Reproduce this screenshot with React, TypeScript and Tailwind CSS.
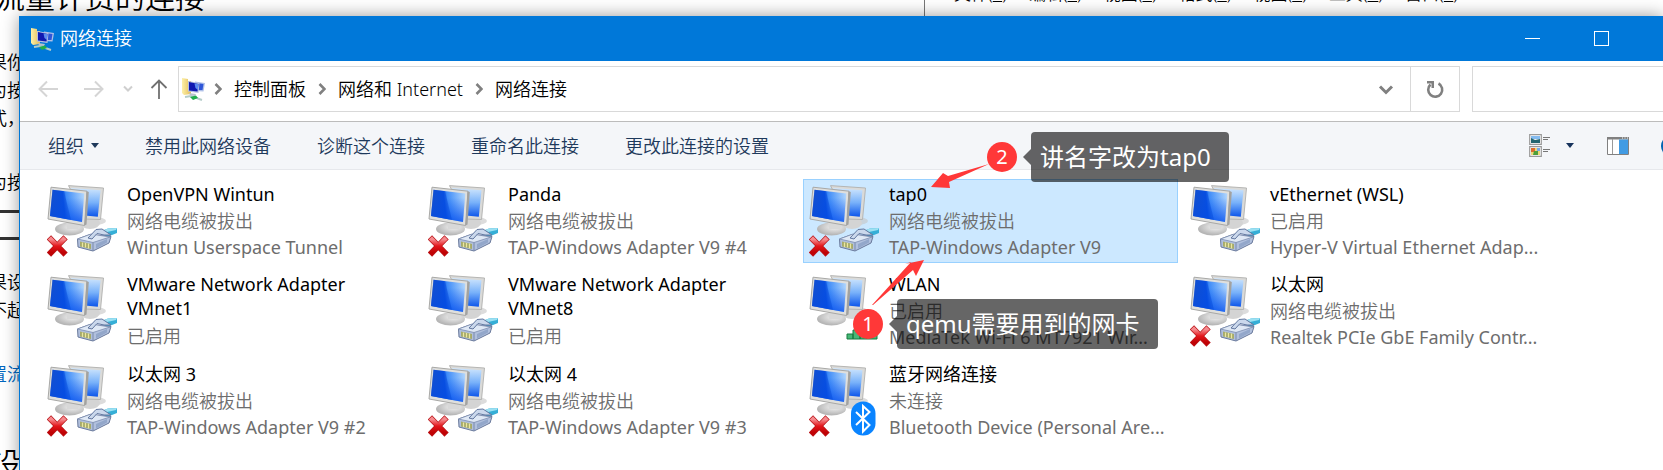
import React from "react";
import { clsx } from "clsx";

type Badge = "cable" | "wifi" | "bluetooth";

interface Connection {
  name: string;
  status?: string;
  device?: string;
  badge: Badge;
  unplugged?: boolean;
  selected?: boolean;
}

const connections: Connection[] = [
  { name: "OpenVPN Wintun", status: "网络电缆被拔出", device: "Wintun Userspace Tunnel", badge: "cable", unplugged: true },
  { name: "Panda", status: "网络电缆被拔出", device: "TAP-Windows Adapter V9 #4", badge: "cable", unplugged: true },
  { name: "tap0", status: "网络电缆被拔出", device: "TAP-Windows Adapter V9", badge: "cable", unplugged: true, selected: true },
  { name: "vEthernet (WSL)", status: "已启用", device: "Hyper-V Virtual Ethernet Adap...", badge: "cable" },
  { name: "VMware Network Adapter VMnet1", status: "已启用", badge: "cable" },
  { name: "VMware Network Adapter VMnet8", status: "已启用", badge: "cable" },
  { name: "WLAN", status: "已启用", device: "MediaTek Wi-Fi 6 MT7921 Wir...", badge: "wifi" },
  { name: "以太网", status: "网络电缆被拔出", device: "Realtek PCIe GbE Family Contr...", badge: "cable", unplugged: true },
  { name: "以太网 3", status: "网络电缆被拔出", device: "TAP-Windows Adapter V9 #2", badge: "cable", unplugged: true },
  { name: "以太网 4", status: "网络电缆被拔出", device: "TAP-Windows Adapter V9 #3", badge: "cable", unplugged: true },
  { name: "蓝牙网络连接", status: "未连接", device: "Bluetooth Device (Personal Are...", badge: "bluetooth", unplugged: true },
];

function Gradients() {
  return (
    <svg width="0" height="0" className="absolute" aria-hidden="true">
      <defs>
        <linearGradient id="screen" x1="0" y1="0.1" x2="1" y2="0">
          <stop offset="0" stopColor="#1f56c8" />
          <stop offset="0.36" stopColor="#0a55e8" />
          <stop offset="0.46" stopColor="#3f8cf8" />
          <stop offset="1" stopColor="#b4d8fd" />
        </linearGradient>
        <linearGradient id="screenFade" x1="0" y1="0" x2="0" y2="1">
          <stop offset="0.25" stopColor="#0650ee" stopOpacity="0" />
          <stop offset="1" stopColor="#0650ee" stopOpacity="0.8" />
        </linearGradient>
        <linearGradient id="backScreen" x1="0" y1="0" x2="0" y2="1">
          <stop offset="0" stopColor="#cfe6fd" />
          <stop offset="0.5" stopColor="#79b2fa" />
          <stop offset="1" stopColor="#0c55ea" />
        </linearGradient>
        <radialGradient id="foot" cx="0.6" cy="0.35" r="0.6">
          <stop offset="0" stopColor="#f4f4f4" />
          <stop offset="1" stopColor="#b6b6b6" />
        </radialGradient>
        <linearGradient id="cross" x1="0" y1="0" x2="0" y2="1">
          <stop offset="0" stopColor="#f58a8e" />
          <stop offset="0.5" stopColor="#e3161b" />
          <stop offset="1" stopColor="#c00205" />
        </linearGradient>
        <linearGradient id="folder" x1="0" y1="0" x2="1" y2="0">
          <stop offset="0" stopColor="#fdf0a8" />
          <stop offset="1" stopColor="#e3bd58" />
        </linearGradient>
      </defs>
    </svg>
  );
}

function AdapterIcon({ badge, unplugged }: { badge: Badge; unplugged?: boolean }) {
  return (
    <svg viewBox="0 0 70 72" className="h-[72px] w-[70px] shrink-0" aria-hidden="true">
      <ellipse cx="48" cy="36" rx="11" ry="4" fill="#c4c4c4" opacity="0.6" />
      <ellipse cx="43" cy="38" rx="10" ry="6" fill="#d4d4d4" />
      <path d="M21.500 .6 56.500 3 53.500 34.500 38 34Z" fill="#dadad8" stroke="#b0b0ae" strokeWidth=".9" />
      <path d="M24 3 53.500 5.200 50.800 31.800 38 30.500Z" fill="url(#backScreen)" />
      <path d="M20 38 34 40 35 46 20 46Z" fill="#bcbcbc" />
      <ellipse cx="22.500" cy="44" rx="14.500" ry="6.500" fill="url(#foot)" />
      <path d="M19 37 33 39 31 44 20 44Z" fill="#d8d8d8" />
      <path d="M4 2.200 40 6.200 37.500 40.500 1 34Z" fill="#dfdfdd" stroke="#a8a8a6" strokeWidth="1" />
      <path d="M39.500 6.200 41.800 7 39.500 39.500 37.500 40.500Z" fill="#a2a2a0" />
      <path d="M5.500 4.800 37.300 8.600 35 37 3 31Z" fill="url(#screen)" />
      <path d="M5.500 4.800 37.300 8.600 35 37 3 31Z" fill="url(#screenFade)" />
      <path d="M5.500 4.800 17 6.200 24 34.900 3 31Z" fill="#0447d6" opacity=".45" />
      {badge === "cable" && (
        <g strokeLinejoin="round">
          <path d="M52 47 61 43.500 70 43 70 48 60 52Z" fill="#35aed6" />
          <path d="M54 46 61 43.500 70 43 69 45 60 47Z" fill="#9be0f2" />
          <path d="M30.500 54 43 49.500 64 51.500 62 58 46 66 31 62Z" fill="#b1c0dd" stroke="#6a7a9c" />
          <path d="M30.500 54 44 49 63 52 46 57.500Z" fill="#dfe8f5" stroke="#7c8db0" strokeWidth=".8" />
          <path d="M41 53 49 44.500 55 44 64 50 57 50 50 48.500 45 54Z" fill="#cbd8ec" stroke="#62779f" />
          <path d="M46 57.500V66" stroke="#7889a9" />
          <path d="M33 56.500 44 59V64L33 61.500Z" fill="#a6aa6a" />
          <path d="M35.500 57.500v4.500M38.500 58v4.500M41.500 58.500v5" stroke="#ece79f" strokeWidth="1.200" />
          <path d="M49 59 60 54v3.500l-11 6Z" fill="#93a7ca" />
        </g>
      )}
      {badge === "wifi" && (
        <g stroke="#157a3f" fill="#46b877">
          <path d="M38 59h6v5h-6ZM44 55h7v9h-7ZM51 50h7v14h-7ZM58 45h10v19H58Z" />
        </g>
      )}
      {badge === "bluetooth" && (
        <g>
          <rect x="42" y="36.500" width="24.500" height="34" rx="12" fill="#0a84ff" />
          <path d="M47 47 60.500 60 54 66.500V41L60.500 47 47 60" fill="none" stroke="#fff" strokeWidth="2" />
        </g>
      )}
      {unplugged && (
        <g strokeLinecap="square" fill="none">
          <path d="M4 54.500 16.500 67.500M16.500 54.500 4 67.500" stroke="#b91418" strokeWidth="6" />
          <path d="M4 54.500 16.500 67.500M16.500 54.500 4 67.500" stroke="url(#cross)" strokeWidth="4.600" />
        </g>
      )}
    </svg>
  );
}

function FolderIcon() {
  return (
    <svg viewBox="0 0 24 24" className="size-6 shrink-0" aria-hidden="true">
      <path d="M1 1 7 2V4h3v13L3 18 1 16Z" fill="url(#folder)" />
      <path d="M14 4.500 24 6 22.500 14.500 14 14Z" fill="#aebfe8" />
      <path d="M15.500 6 22.500 7 21.500 13 15 13Z" fill="#2e56d8" />
      <path d="M7 4 18.500 6 17.500 16 7 14.500Z" fill="#b4bfe0" />
      <path d="M8 5 17.500 7 16.500 14.500 8 13.500Z" fill="#1018b0" />
      <path d="M13.500 6.500 17.500 7 17 13 14.500 11Z" fill="#5b8cf0" />
      <path d="M8 16 15 17 14 19 9 18.500Z" fill="#b9c0cc" />
      <path d="M4 20 10 19 21 23" fill="none" stroke="#b4ccc9" strokeWidth="2" />
      <path d="M9 20 15 18.500 17 21 12 23Z" fill="#1fae4b" />
    </svg>
  );
}

function Crumb({ children }: { children: React.ReactNode }) {
  return (
    <li className="flex items-center">
      <svg viewBox="0 0 8 12" className="mr-3 h-3 w-2" aria-hidden="true">
        <path d="M1.500 1 6.500 6 1.500 11" fill="none" stroke="#808080" strokeWidth="2.600" />
      </svg>
      <a href="#" className="mr-3">{children}</a>
    </li>
  );
}

function NavIcon({ d, tone, width = 1.8 }: { d: string; tone: string; width?: number }) {
  return (
    <svg viewBox="0 0 20 20" className={clsx("size-5", tone)} aria-hidden="true">
      <path d={d} fill="none" stroke="currentColor" strokeWidth={width} />
    </svg>
  );
}

function Callout({ step, children }: { step: string; children: React.ReactNode }) {
  return (
    <div className="flex items-center font-normal">
      <span className="flex size-[30px] items-center justify-center rounded-full bg-[#ff3838] text-xl leading-none text-white">{step}</span>
      <svg viewBox="0 0 8 16" className="ml-[6px] h-4 w-2" aria-hidden="true">
        <path d="M0 8 8 0V16Z" fill="#000" fillOpacity=".6" />
      </svg>
      <span className="h-[50px] rounded bg-black/60 pr-[18px] pl-[9px] text-2xl leading-[50px] whitespace-nowrap text-white">{children}</span>
    </div>
  );
}

const backgroundMenu = [
  ["文件", "E"],
  ["编辑", "E"],
  ["视图", "E"],
  ["格式", "E"],
  ["视图", "V"],
  ["工具", "B"],
  ["窗口", "E"],
];

function Backdrop() {
  return (
    <div className="absolute inset-0 overflow-hidden bg-white text-lg leading-7 whitespace-nowrap" aria-hidden="true">
      <p className="absolute -top-[23px] -left-[5px] text-[30px] leading-10">流量计费的连接</p>
      <p className="absolute top-[48px] -left-[11px]">果你</p>
      <p className="absolute top-[76px] -left-[11px]">为按</p>
      <p className="absolute top-[104px] -left-[11px]">式，</p>
      <p className="absolute top-[168px] -left-[11px]">为按</p>
      <div className="absolute top-[210px] -left-2 h-[30px] w-10 border-y-3 border-[#333]" />
      <p className="absolute top-[268px] -left-[11px]">果设</p>
      <p className="absolute top-[296px] -left-[11px]">不起</p>
      <p className="absolute top-[360px] -left-[11px] text-[#0067c0]">置流</p>
      <p className="absolute top-[443px] -left-[9px] text-[30px] leading-10">设</p>
      <div className="absolute top-0 right-0 left-[924px] h-8 border-l border-[#777] bg-white">
        <p className="absolute -top-[20px] left-[29px] flex gap-[22px] text-[17px]">
          {backgroundMenu.map(([label, key], i) => (
            <span key={i}>{label}(<u>{key}</u>)</span>
          ))}
        </p>
      </div>
    </div>
  );
}

export default function App() {
  return (
    <div className="relative min-h-screen overflow-hidden pt-4 pl-[19px] font-['Noto_Sans','Noto_Sans_CJK_SC',sans-serif] text-lg font-[350] text-black">
      <Gradients />
      <Backdrop />
      <main className="relative flex min-h-[calc(100vh-16px)] flex-col border-l border-[#0078d7] bg-white shadow-[0_0_16px_rgba(0,0,0,0.4)]">
        <header className="flex h-[45px] items-center bg-[#0078d9] pl-[10px] text-white">
          <FolderIcon />
          <h1 className="ml-[6px] pb-px text-lg">网络连接</h1>
          <div className="mr-[54px] ml-auto flex gap-[54px]">
            <button aria-label="最小化" className="flex h-[15px] w-[15px] items-center"><span className="h-px w-full bg-white" /></button>
            <button aria-label="最大化" className="size-[15px] border border-white" />
          </div>
        </header>

        <div className="flex h-[61px] items-start border-b border-[#bcbcbc] pt-[5px]">
          <nav className="flex h-[46px] items-center pl-[18px]">
            <button aria-label="后退"><NavIcon tone="text-[#d5d5d5]" d="M20 10H1.500M9 2.500 1.500 10 9 17.500" width={2} /></button>
            <button aria-label="前进" className="ml-[26px]"><NavIcon tone="text-[#d5d5d5]" d="M0 10H18.500M11 2.500 18.500 10 11 17.500" width={2} /></button>
            <button aria-label="最近的位置" className="ml-[14px]"><NavIcon tone="text-[#cfcfcf]" d="M6 7.500 10 11.500 14 7.500" width={2} /></button>
            <button aria-label="上移" className="ml-[11px]"><NavIcon tone="text-[#707070]" d="M10 20V1.500M2.500 9 10 1.500 17.500 9" /></button>
          </nav>
          <div className="ml-[9px] flex h-[46px] flex-1 items-center border border-[#d9d9d9] pl-[2px]">
            <FolderIcon />
            <ol className="ml-[9px] flex items-center whitespace-nowrap">
              <Crumb>控制面板</Crumb>
              <Crumb>网络和 Internet</Crumb>
              <Crumb>网络连接</Crumb>
            </ol>
            <button aria-label="上一个位置" className="mr-[14px] ml-auto"><NavIcon tone="text-[#808080]" d="M4 7.500 10 13.500 16 7.500" width={3} /></button>
            <button aria-label="刷新" className="flex h-full w-[49px] items-center justify-center border-l border-[#d9d9d9]">
              <svg viewBox="0 0 20 20" className="size-5 text-[#808080]" aria-hidden="true">
                <path d="M13.500 4.500A7 7 0 1 1 5.500 5.500" fill="none" stroke="currentColor" strokeWidth="2.600" />
                <path d="M2 2H9V9H6.500V4.500H2Z" fill="currentColor" />
              </svg>
            </button>
          </div>
          <input aria-label="搜索" className="ml-3 h-[46px] w-[191px] border border-r-0 border-[#d9d9d9] outline-none" />
        </div>

        <div className="flex h-12 items-center gap-[46px] border-b border-[#e6e8ec] bg-[#f4f6f9] pl-7 whitespace-nowrap text-[#1e395b]">
          <button className="flex items-center gap-[7px]">
            组织
            <svg viewBox="0 0 8 5" className="h-[5px] w-2" aria-hidden="true"><path d="M0 0H8L4 5Z" fill="#1e395b" /></svg>
          </button>
          <button>禁用此网络设备</button>
          <button>诊断这个连接</button>
          <button>重命名此连接</button>
          <button>更改此连接的设置</button>
          <div className="-mr-5 ml-auto flex items-center">
            <button aria-label="更改视图">
              <svg viewBox="0 0 22 24" className="h-6 w-[22px]" aria-hidden="true">
                <path d="M.7.7H12.300V10.300H.7ZM.7 12.700H12.300V22.300H.7Z" fill="#fff" stroke="#999" strokeWidth="1.200" />
                <path d="M2 2h9v3H2Z" fill="#84bbf0" /><path d="M2 4 6 6 11 5V9H2Z" fill="#246570" />
                <path d="M2 14h9v7H2Z" fill="#eed878" /><path d="M2 14h4v4H2Z" fill="#dc6b2c" /><path d="M5 17h4v4H4Z" fill="#4c9e3b" /><path d="M8 14h3v3H8Z" fill="#77a9e9" />
                <path d="M14 3.500h7M14 5.500h5M14 15.500h7M14 17.500h5" stroke="#777" />
              </svg>
            </button>
            <button aria-label="更多选项" className="ml-[15px]">
              <svg viewBox="0 0 8 5" className="h-[5px] w-2" aria-hidden="true"><path d="M0 0H8L4 5Z" fill="#17335c" /></svg>
            </button>
            <button aria-label="预览窗格" className="ml-[33px]">
              <svg viewBox="0 0 22 18" className="h-[18px] w-[22px]" aria-hidden="true">
                <path d="M.5.5H21.500V17.500H.5Z" fill="#fff" stroke="#808080" /><path d="M0 0H22V2.500H0Z" fill="#808080" />
                <path d="M5.500 2V17" stroke="#999" /><path d="M12 2.500H21V17H12Z" fill="#419be3" />
                <path d="M15 1h1M17.500 1h1M20 1h1" stroke="#fff" />
              </svg>
            </button>
            <button aria-label="帮助" className="ml-8 size-[22px] rounded-full bg-[#0063b1]" />
          </div>
        </div>

        <ul className="grid grid-cols-[repeat(auto-fill,375px)] gap-[6px] pt-[9px] pl-[21px]">
          {connections.map((c) => (
            <li
              key={c.name}
              className={clsx(
                "flex h-[84px] border pt-[5px] pl-[5px]",
                c.selected ? "border-[#99d1ff] bg-[#cce8ff]" : "border-transparent",
              )}
            >
              <AdapterIcon badge={c.badge} unplugged={c.unplugged} />
              <div className="-mt-1 ml-[10px] w-[285px]">
                <h2 className={clsx("text-lg font-normal", c.device ? "leading-[26px]" : "w-[245px] pt-px pb-[2px] leading-6")}>{c.name}</h2>
                <p className="text-lg leading-7 text-[#6d6d6d]">{c.status}</p>
                {c.device && <p className="text-lg leading-6 font-normal whitespace-nowrap text-[#6d6d6d]">{c.device}</p>}
              </div>
            </li>
          ))}
        </ul>
      </main>

      <svg viewBox="0 0 130 130" className="pointer-events-none absolute top-[160px] left-[860px] size-[130px] overflow-visible" aria-hidden="true">
        <path d="M129 4 88 16 83 13 71 27 90 28 89 22Z" fill="#ff3838" />
        <path d="M12 145 51 102 45 104 64 100 56 116 53 110 13 145Z" fill="#ff3838" />
      </svg>
      <div className="absolute top-[132px] left-[987px]"><Callout step="2">讲名字改为tap0</Callout></div>
      <div className="absolute top-[299px] left-[853px]"><Callout step="1">qemu需要用到的网卡</Callout></div>
    </div>
  );
}
